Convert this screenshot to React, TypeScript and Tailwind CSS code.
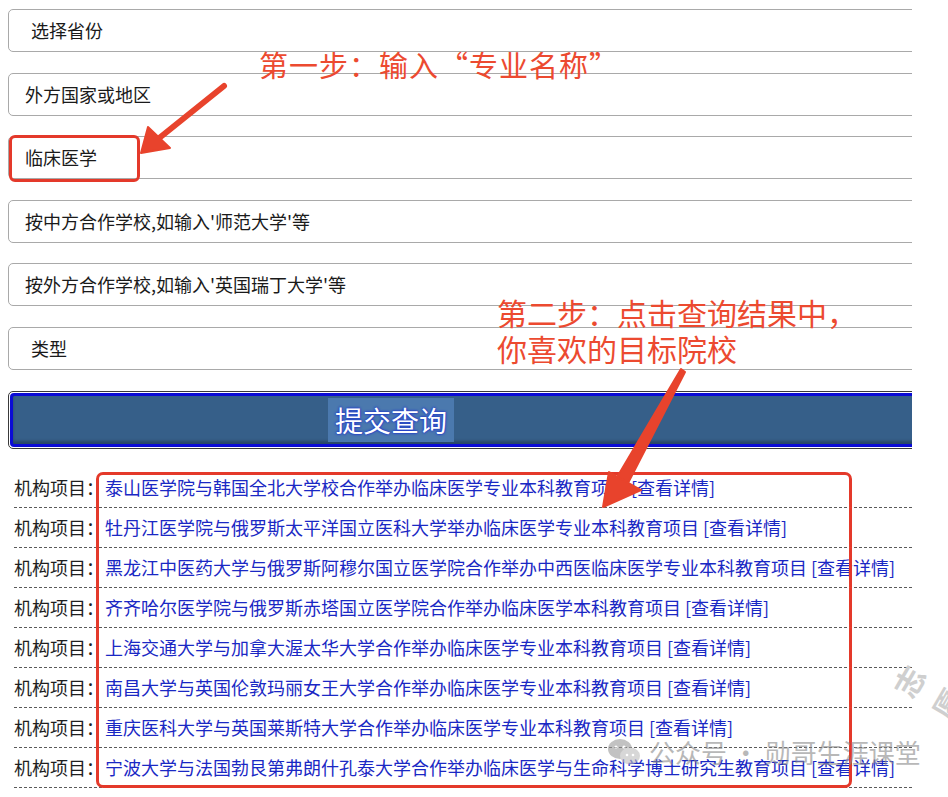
import React from "react";

const fields = [
  { text: "选择省份", indent: "pl-[22px]" },
  { text: "外方国家或地区", indent: "pl-[16px]" },
  { text: "临床医学", indent: "pl-[16px]" },
  { text: "按中方合作学校,如输入'师范大学'等", indent: "pl-[16px]" },
  { text: "按外方合作学校,如输入'英国瑞丁大学'等", indent: "pl-[16px]" },
  { text: "类型", indent: "pl-[22px]" },
];

const results = [
  "泰山医学院与韩国全北大学校合作举办临床医学专业本科教育项目",
  "牡丹江医学院与俄罗斯太平洋国立医科大学举办临床医学专业本科教育项目",
  "黑龙江中医药大学与俄罗斯阿穆尔国立医学院合作举办中西医临床医学专业本科教育项目",
  "齐齐哈尔医学院与俄罗斯赤塔国立医学院合作举办临床医学本科教育项目",
  "上海交通大学与加拿大渥太华大学合作举办临床医学专业本科教育项目",
  "南昌大学与英国伦敦玛丽女王大学合作举办临床医学专业本科教育项目",
  "重庆医科大学与英国莱斯特大学合作举办临床医学专业本科教育项目",
  "宁波大学与法国勃艮第弗朗什孔泰大学合作举办临床医学与生命科学博士研究生教育项目",
];

function Arrows() {
  return (
    <svg
      className="pointer-events-none absolute left-0 top-0"
      width="948"
      height="797"
      viewBox="0 0 948 797"
    >
      <g fill="#e8432c" stroke="#e8432c" strokeLinecap="round" strokeLinejoin="round">
        <line x1="224" y1="86" x2="158" y2="139" strokeWidth="6" />
        <polygon points="148,127 141,153 170,148" strokeWidth="2" />
        {/* tapered shaft, thicker near the head */}
        <polygon points="681,369 685,372 627,485 616,479" strokeWidth="2" />
        <polygon points="609,472 603,507 641,490" strokeWidth="2" />
      </g>
    </svg>
  );
}

export default function App() {
  return (
    <div className="relative h-[797px] w-[948px] overflow-hidden bg-white font-['Noto_Sans_CJK_SC','Noto_Sans',sans-serif]">
      <div className="ml-2 w-[904px] overflow-hidden pt-[9px]">
        <div className="flex flex-col gap-[20.6px]">
          {fields.map((f) => (
            <div
              key={f.text}
              className={`flex h-[43px] w-[930px] items-center rounded-[5px] border border-[#a9a9a9] bg-white text-[18px] text-[#1a1a1a] ${f.indent}`}
            >
              {f.text}
            </div>
          ))}
        </div>

        <div className="mt-[21px] h-[58px] w-[930px] rounded-[5px] border border-[#3a3a3a] p-px">
          <div className="flex h-full items-center rounded-[4px] border-y-[3px] border-l-[3px] border-[#0b0bd6] bg-[#365f89] pl-[315px] shadow-[inset_0_-3px_3px_rgba(0,0,0,0.25)]">
            <span className="flex h-[44px] w-[126px] items-center justify-center bg-[#4b79ae] text-[28px] text-white [text-shadow:0_0_3px_#1a2fd0,0_0_2px_#1a2fd0]">
              提交查询
            </span>
          </div>
        </div>

        <div className="mt-[19px] pl-[6px]">
          {results.map((r) => (
            <div
              key={r}
              className="flex h-[40px] items-center border-b border-dashed border-[#5a5a5a] text-[18px] whitespace-nowrap"
            >
              <span className="text-[#1e1e1e]">机构项目：</span>
              <a className="ml-px cursor-pointer text-[#1a28c4]">
                {r} [查看详情]
              </a>
            </div>
          ))}
        </div>
      </div>

      {/* annotations */}
      <div className="absolute left-[9px] top-[135px] h-[47px] w-[131px] rounded-[6px] border-[3px] border-[#e4392a]" />
      <div className="absolute left-[96px] top-[472px] h-[316px] w-[756px] rounded-[7px] border-[3px] border-[#e4392a]" />

      <div className="absolute left-[259px] top-[44px] text-[29px] leading-[40px] tracking-[1px] text-[#ec4a30]">
        第一步：输入“专业名称”
      </div>
      <div className="absolute left-[497px] top-[294px] text-[30px] leading-[36px] text-[#ec4a30]">
        <div>第二步：点击查询结果中，</div>
        <div>你喜欢的目标院校</div>
      </div>

      <Arrows />

      {/* watermark */}
      <div className="pointer-events-none absolute left-[607px] top-[732px] flex items-center gap-2 text-[26px] text-[#8a8a8a] opacity-60">
        <svg width="34" height="30" viewBox="0 0 34 30">
          <ellipse cx="13" cy="12" rx="12" ry="10" fill="#9a9a9a" />
          <ellipse cx="23" cy="19" rx="10" ry="8.5" fill="#bdbdbd" />
          <circle cx="9" cy="10" r="1.6" fill="#fff" />
          <circle cx="17" cy="10" r="1.6" fill="#fff" />
          <circle cx="20" cy="18" r="1.3" fill="#fff" />
          <circle cx="26" cy="18" r="1.3" fill="#fff" />
        </svg>
        <span>公众号 · 勋哥生涯课堂</span>
      </div>
      <div className="pointer-events-none absolute left-[912px] top-[645px] rotate-[-60deg] text-[30px] font-bold text-[#cfcfcf]">
        志愿
      </div>
    </div>
  );
}
